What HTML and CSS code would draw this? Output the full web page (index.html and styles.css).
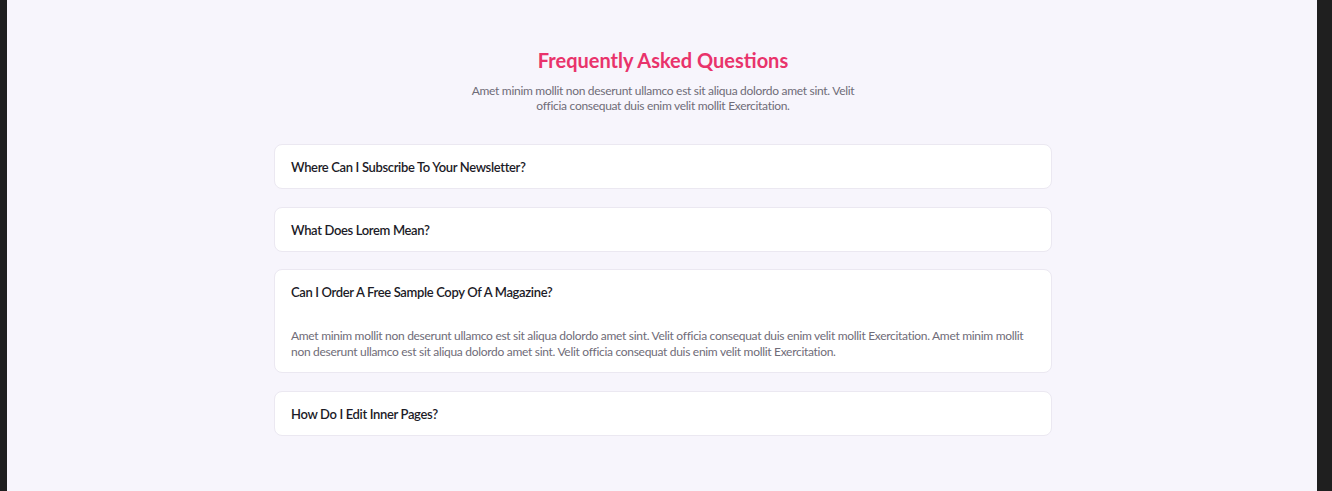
FILE: index.html
```html
<!DOCTYPE html>
<html lang="en">
<head>
<meta charset="utf-8">
<title>FAQ</title>
<link rel="stylesheet" href="styles.css">
</head>
<body>
<div class="frame">
  <main class="page">
    <section class="faq">
      <header class="faq-head">
        <h1 class="faq-title">Frequently Asked Questions</h1>
        <p class="faq-sub">Amet minim mollit non deserunt ullamco est sit aliqua dolordo amet sint. Velit officia consequat duis enim velit mollit Exercitation.</p>
      </header>
      <div class="faq-list">
        <div class="faq-item">
          <h3 class="faq-q">Where Can I Subscribe To Your Newsletter?</h3>
        </div>
        <div class="faq-item">
          <h3 class="faq-q">What Does Lorem Mean?</h3>
        </div>
        <div class="faq-item open">
          <h3 class="faq-q">Can I Order A Free Sample Copy Of A Magazine?</h3>
          <p class="faq-a">Amet minim mollit non deserunt ullamco est sit aliqua dolordo amet sint. Velit officia consequat duis enim velit mollit Exercitation. Amet minim mollit non deserunt ullamco est sit aliqua dolordo amet sint. Velit officia consequat duis enim velit mollit Exercitation.</p>
        </div>
        <div class="faq-item">
          <h3 class="faq-q">How Do I Edit Inner Pages?</h3>
        </div>
      </div>
    </section>
  </main>
</div>
</body>
</html>
```
FILE: styles.css
```css
html, body {
  margin: 0;
  padding: 0;
  height: 100%;
}
body {
  background: #1f1f1f;
  font-family: "Lato", "Noto Sans", sans-serif;
}
.frame {
  display: flex;
  height: 100%;
  padding-left: 7px;
  padding-right: 15px;
  box-sizing: border-box;
}
.page {
  flex: 1;
  background: #f7f5fc;
  display: flex;
  justify-content: center;
}
.faq {
  width: 778px;
  padding-top: 47px;
  margin-left: 2px;
}
.faq-head {
  display: flex;
  flex-direction: column;
  align-items: center;
}
.faq-title {
  margin: 0;
  font-size: 20px;
  line-height: 26px;
  font-weight: 700;
  color: #e9336b;
}
.faq-sub {
  margin: 10px 0 0;
  max-width: 400px;
  text-align: center;
  font-size: 12px;
  line-height: 15px;
  letter-spacing: -0.3px;
  color: #6f6c78;
}
.faq-list {
  margin-top: 31px;
  display: flex;
  flex-direction: column;
  gap: 17.5px;
}
.faq-item {
  background: #ffffff;
  border: 1px solid #ebe8f1;
  border-radius: 8px;
  padding: 14px 16px 13px;
}
.faq-item.open {
  padding-bottom: 12px;
}
.faq-q {
  margin: 0;
  font-size: 13px;
  line-height: 16px;
  font-weight: 600;
  letter-spacing: -0.35px;
  color: #1c1b27;
}
.faq-a {
  margin: 28px 0 0;
  font-size: 12px;
  line-height: 16px;
  letter-spacing: -0.3px;
  color: #6f6c78;
}
```
